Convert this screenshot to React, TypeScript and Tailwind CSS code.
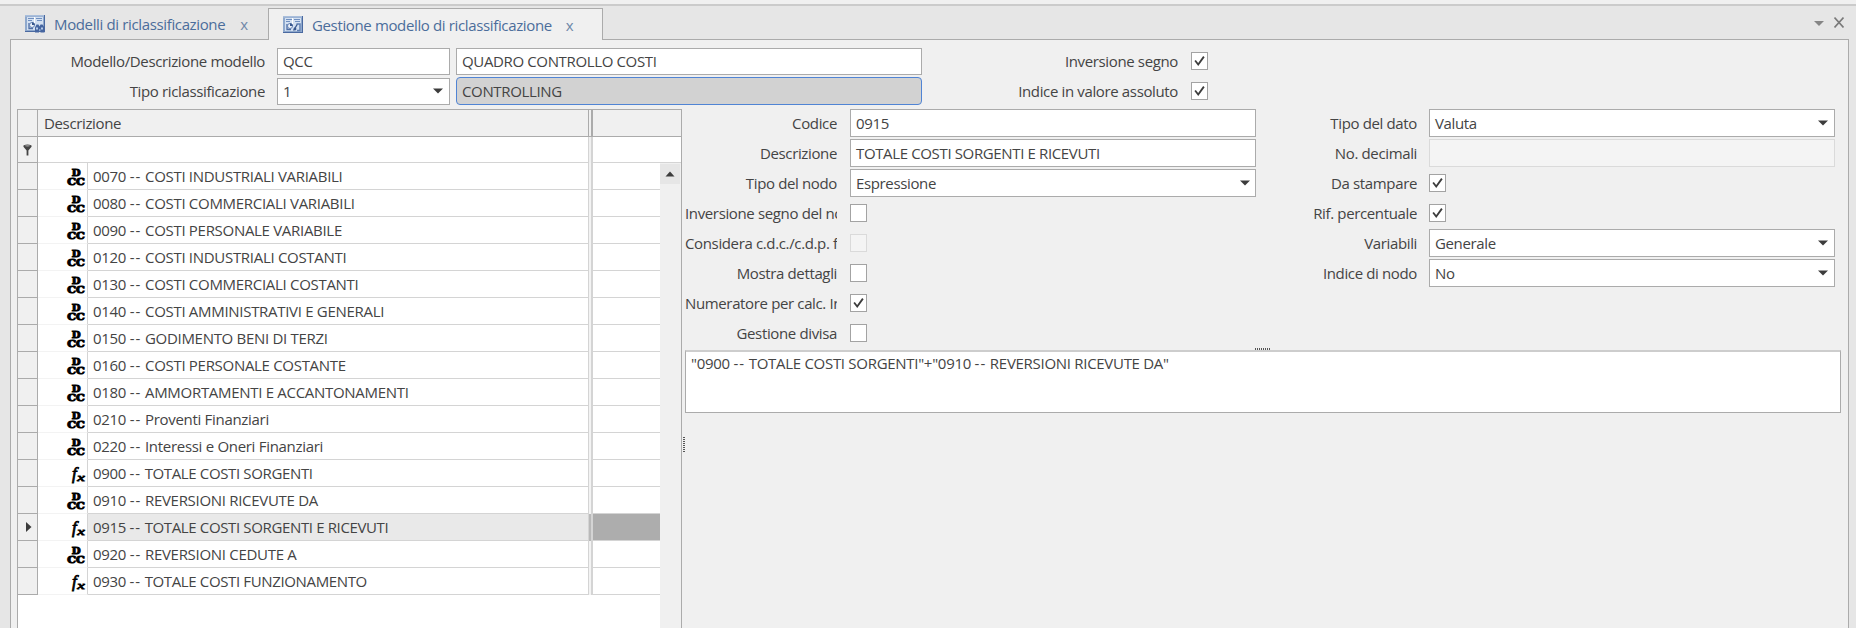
import type { ReactNode } from "react";

type Kind = "dcc" | "fx";

const rows: { kind: Kind; code: string; name: string; selected?: boolean }[] = [
  { kind: "dcc", code: "0070", name: "COSTI INDUSTRIALI VARIABILI" },
  { kind: "dcc", code: "0080", name: "COSTI COMMERCIALI VARIABILI" },
  { kind: "dcc", code: "0090", name: "COSTI PERSONALE VARIABILE" },
  { kind: "dcc", code: "0120", name: "COSTI INDUSTRIALI COSTANTI" },
  { kind: "dcc", code: "0130", name: "COSTI COMMERCIALI COSTANTI" },
  { kind: "dcc", code: "0140", name: "COSTI AMMINISTRATIVI E GENERALI" },
  { kind: "dcc", code: "0150", name: "GODIMENTO BENI DI TERZI" },
  { kind: "dcc", code: "0160", name: "COSTI PERSONALE COSTANTE" },
  { kind: "dcc", code: "0180", name: "AMMORTAMENTI E ACCANTONAMENTI" },
  { kind: "dcc", code: "0210", name: "Proventi Finanziari" },
  { kind: "dcc", code: "0220", name: "Interessi e Oneri Finanziari" },
  { kind: "fx", code: "0900", name: "TOTALE COSTI SORGENTI" },
  { kind: "dcc", code: "0910", name: "REVERSIONI RICEVUTE DA" },
  { kind: "fx", code: "0915", name: "TOTALE COSTI SORGENTI E RICEVUTI", selected: true },
  { kind: "dcc", code: "0920", name: "REVERSIONI CEDUTE A" },
  { kind: "fx", code: "0930", name: "TOTALE COSTI FUNZIONAMENTO" },
];

function Dashes() {
  return <span className="tracking-[1px]">--</span>;
}

function NodeIcon({ kind }: { kind: Kind }) {
  if (kind === "dcc") {
    return (
      <svg className="block shrink-0 overflow-visible tracking-normal" width="18" height="18" viewBox="0 0 18 18" fontFamily="'DejaVu Serif', serif" fontWeight="700" fontSize="10" stroke="#000" strokeWidth="1.1">
        <text x="4.8" y="8" textLength="8.8" lengthAdjust="spacingAndGlyphs">D</text>
        <text x="0.3" y="17.4" textLength="17.6" lengthAdjust="spacingAndGlyphs">CC</text>
      </svg>
    );
  }
  return (
    <svg className="block shrink-0 overflow-visible tracking-normal" width="18" height="18" viewBox="0 0 18 18" fontFamily="'Liberation Serif', serif" fontStyle="italic" stroke="#000" strokeWidth="0.8">
      <text x="5" y="13.5" fontSize="17">f</text>
      <text x="10.2" y="15.8" fontSize="11" textLength="7.6" lengthAdjust="spacingAndGlyphs">x</text>
    </svg>
  );
}

function TabIcon({ search }: { search?: boolean }) {
  return (
    <svg className="block shrink-0" width="20" height="18" viewBox="0 0 20 18">
      <rect x="0" y="0" width="20" height="17" fill="#8fa9cd" />
      <rect x="0" y="0" width="20" height="1.5" fill="#a9bedb" />
      <path d="M19 0h1v17H0v-1h19z" fill="#4a69a0" />
      <rect x="2" y="2" width="16" height="13" fill="#d3e0f1" />
      <path d="M3 3.5h6M11 3.5h6M3 5.5h4M12 5.5h5" stroke="#6f8fc0" />
      <path d="M9.5 2v7" stroke="#fff" />
      <path d="M4 8v5.5h4" fill="none" stroke="#4f6fa6" strokeWidth="1.3" />
      <circle cx="7" cy="10" r="2.5" fill="#eef3fa" stroke="#6482b4" strokeWidth="1" />
      <path d="M7 10V7.2A2.8 2.8 0 0 1 9.8 10z" fill="#38588e" />
      {search ? (
        <g>
          <path d="M10 17.5v-5l1.5-3h2l1 2 1-2h2l2 3v5h-4v-3h-1.5v3z" fill="#4565a0" />
          <path d="M11 13.5h2M16 13.5h2" stroke="#b7cbe8" strokeWidth="2" />
        </g>
      ) : (
        <g>
          <path d="M10.5 14.5l4-6.5" stroke="#38588e" strokeWidth="1.3" />
          <path d="M13.5 8H17v6.5h-3" fill="none" stroke="#5f7fb2" strokeWidth="1.5" />
          <circle cx="12" cy="13" r="1.4" fill="#38588e" />
        </g>
      )}
    </svg>
  );
}

function Arrow() {
  return (
    <svg className="block shrink-0" width="10" height="6" viewBox="0 0 10 6">
      <path d="M0 0.5h10L5 5.5z" fill="#3c3c3c" />
    </svg>
  );
}

function Field({ children, className = "", drop }: { children?: ReactNode; className?: string; drop?: boolean }) {
  return (
    <div className={"flex shrink-0 items-center justify-between border border-[#ababab] bg-white pl-[5px] " + className}>
      <span>{children}</span>
      {drop && <Arrow />}
    </div>
  );
}

function Check({ checked, disabled }: { checked?: boolean; disabled?: boolean }) {
  return (
    <div className={"flex h-[18px] w-[17px] shrink-0 items-center justify-center border " + (disabled ? "border-[#dadada] bg-[#f4f4f4]" : "border-[#a3a3a3] bg-white")}>
      {checked && (
        <svg className="block" width="11" height="12" viewBox="0 0 12 12" fill="none" stroke="#3c3c3c" strokeWidth="2">
          <path d="M1.2 5.5L4.6 9.8L10.8 1.2" />
        </svg>
      )}
    </div>
  );
}

function Row({ label, labelClass, children, clip }: { label: string; labelClass: string; children: ReactNode; clip?: boolean }) {
  return (
    <div className="flex h-[30px] items-center">
      <span className={"shrink-0 overflow-hidden whitespace-nowrap " + (clip ? "text-left " : "text-right ") + labelClass}>{label}</span>
      {children}
    </div>
  );
}

function Tree() {
  return (
    <div className="flex w-[665px] shrink-0 flex-col border-x border-t border-[#ababab] bg-[#f0f0f0]">
      <div className="flex h-[27px] shrink-0 border-b border-[#ababab]">
        <div className="w-5 border-r border-[#ababab]" />
        <div className="flex w-[551px] items-center border-r border-[#ababab] pl-[6px]">Descrizione</div>
        <div className="w-[4px] border-r-2 border-[#ababab]" />
      </div>
      <div className="flex h-[26px] shrink-0">
        <div className="flex w-5 items-center justify-center border-r border-b border-[#ababab]">
          <svg className="block" width="9" height="12" viewBox="0 0 10 13">
            <path d="M0.5 1.5Q5-0.5 9.5 1.5V3L6 7v5.5H4V7L0.5 3z" fill="#444" />
            <ellipse cx="5" cy="1.9" rx="3" ry="0.8" fill="#aaa" />
          </svg>
        </div>
        <div className="w-[551px] border-r border-b border-[#d4d4d4] bg-white" />
        <div className="w-[4px] border-r-2 border-[#d4d4d4]" />
        <div className="grow border-b border-[#d4d4d4] bg-white" />
      </div>
      <div className="flex grow">
        <div className="flex w-[642px] flex-col bg-white">
          {rows.map((r) => (
            <div key={r.code} className="flex h-[27px] shrink-0">
              <div className="flex w-5 shrink-0 items-center border-r border-b border-[#ababab] bg-[#f0f0f0] pl-[8px]">
                {r.selected && (
                  <svg className="block" width="6" height="10" viewBox="0 0 6 10">
                    <path d="M0 0l5.5 5L0 10z" fill="#3c3c3c" />
                  </svg>
                )}
              </div>
              <div className="flex w-[50px] shrink-0 items-start justify-end border-r border-r-[#d4d4d4] border-b border-b-[#f3f3f3] pt-[5px] pr-[2px]">
                <NodeIcon kind={r.kind} />
              </div>
              <div className={"flex w-[501px] shrink-0 items-center border-r border-b border-[#d4d4d4] pl-[5px] " + (r.selected ? "bg-[#e9e9e9]" : "")}>
                <span className={r.name.startsWith("TOTALE") ? "tracking-[-0.36px]" : "tracking-[-0.3px]"}>
                  {r.code} <Dashes /> {r.name}
                </span>
              </div>
              <div className={"w-[4px] shrink-0 border-r-2 border-[#d4d4d4] " + (r.selected ? "bg-[#b9b9b9]" : "bg-[#f3f3f3]")} />
              <div className={"grow border-b border-[#d4d4d4] " + (r.selected ? "bg-[#adadad]" : "")} />
            </div>
          ))}
        </div>
        <div className="flex grow flex-col bg-[#f0f0f0] pr-px">
          <div className="mt-px flex h-5 items-center justify-center bg-[#e6e6e6]">
            <svg className="block" width="10" height="6" viewBox="0 0 10 6">
              <path d="M0.5 5.5h9L5 0.5z" fill="#3c3c3c" />
            </svg>
          </div>
        </div>
      </div>
    </div>
  );
}

export default function App() {
  const left = "w-[152px] mr-[13px]";
  const right = "w-[161px] mr-[12px]";
  return (
    <div className="flex h-[628px] w-[1856px] flex-col overflow-hidden bg-[#e6e6e6] font-['Open_Sans','Noto_Sans',sans-serif] text-[15px] leading-5 tracking-[-0.36px] text-[#444]">
      <div className="h-[6px] shrink-0 border-b-2 border-[#cbcbcb] bg-[#f0f0f0]" />
      <div className="flex h-[34px] shrink-0 items-end pl-[10px]">
        <div className="flex h-[34px] w-[258px] items-center border-b border-[#ababab] pt-[3px] pl-[15px] text-[#4b6d9b]">
          <TabIcon search />
          <span className="ml-[9px] whitespace-nowrap">Modelli di riclassificazione</span>
          <span className="ml-[15px] text-[#6f88a8]">x</span>
        </div>
        <div className="flex h-8 w-[335px] items-center border-x border-t border-[#ababab] bg-[#f0f0f0] pt-px pl-[14px] text-[#4b6d9b]">
          <TabIcon />
          <span className="ml-[9px] whitespace-nowrap">Gestione modello di riclassificazione</span>
          <span className="ml-[14px] text-[#6f88a8]">x</span>
        </div>
        <div className="flex h-[34px] w-[1246px] items-center justify-end gap-[10px] border-b border-[#ababab] pr-[5px]">
          <svg className="mt-[2px] block" width="10" height="5" viewBox="0 0 10 5">
            <path d="M0 0h10L5 5z" fill="#858585" />
          </svg>
          <svg className="block" width="10" height="11" viewBox="0 0 10 11" stroke="#7a7a7a" strokeWidth="1.6">
            <path d="M0.5 0.5l9 10M9.5 0.5l-9 10" />
          </svg>
        </div>
      </div>
      <div className="ml-[10px] flex w-[1839px] grow flex-col border-x border-[#ababab] bg-[#f0f0f0]">
        <div className="flex h-[69px] shrink-0 pt-[6px]">
          <div className="flex flex-col">
            <Row label="Modello/Descrizione modello" labelClass="w-[254px] mr-[12px]">
              <Field className="mr-[6px] h-[27px] w-[173px]">QCC</Field>
              <Field className="h-[27px] w-[466px]">QUADRO CONTROLLO COSTI</Field>
            </Row>
            <Row label="Tipo riclassificazione" labelClass="w-[254px] mr-[12px]">
              <Field drop className="mr-[6px] h-[27px] w-[173px] pr-[6px]">1</Field>
              <div className="flex h-[28px] w-[466px] items-center rounded-[4px] border border-[#5084d4] bg-[#d2d2d2] pl-[5px]">CONTROLLING</div>
            </Row>
          </div>
          <div className="flex flex-col">
            <Row label="Inversione segno" labelClass="w-[256px] mr-[13px]">
              <Check checked />
            </Row>
            <Row label="Indice in valore assoluto" labelClass="w-[256px] mr-[13px]">
              <Check checked />
            </Row>
          </div>
        </div>
        <div className="flex grow pl-[6px]">
          <Tree />
          <div className="flex w-[3px] shrink-0 flex-col items-center gap-px pt-[328px]">
            {[0, 1, 2, 3, 4, 5, 6, 7].map((i) => (
              <div key={i} className="h-px w-[2px] bg-[#555]" />
            ))}
          </div>
          <div className="flex flex-col">
            <div className="flex h-[239px]">
              <div className="-mt-px flex w-[571px] flex-col">
                <Row label="Codice" labelClass={left}><Field className="h-[28px] w-[406px]">0915</Field></Row>
                <Row label="Descrizione" labelClass={left}><Field className="h-[28px] w-[406px]">TOTALE COSTI SORGENTI E RICEVUTI</Field></Row>
                <Row label="Tipo del nodo" labelClass={left}><Field drop className="h-[28px] w-[406px] pr-[5px]">Espressione</Field></Row>
                <Row clip label="Inversione segno del nodo" labelClass={left}><Check /></Row>
                <Row clip label="Considera c.d.c./c.d.p. f" labelClass={left}><Check disabled /></Row>
                <Row label="Mostra dettagli" labelClass={left}><Check /></Row>
                <Row clip label="Numeratore per calc. In" labelClass={left}><Check checked /></Row>
                <Row label="Gestione divisa" labelClass={left}><Check /></Row>
              </div>
              <div className="-mt-px flex flex-col">
                <Row label="Tipo del dato" labelClass={right}><Field drop className="h-[28px] w-[406px] pr-[6px]">Valuta</Field></Row>
                <Row label="No. decimali" labelClass={right}><div className="h-[28px] w-[406px] border border-[#dadada] bg-[#f4f4f4]" /></Row>
                <Row label="Da stampare" labelClass={right}><Check checked /></Row>
                <Row label="Rif. percentuale" labelClass={right}><Check checked /></Row>
                <Row label="Variabili" labelClass={right}><Field drop className="h-[28px] w-[406px] pr-[6px]">Generale</Field></Row>
                <Row label="Indice di nodo" labelClass={right}><Field drop className="h-[28px] w-[406px] pr-[6px]">No</Field></Row>
              </div>
            </div>
            <div className="flex h-[2px] gap-px pl-[570px]">
              {[0, 1, 2, 3, 4, 5, 6, 7].map((i) => (
                <div key={i} className="h-[2px] w-px bg-[#555]" />
              ))}
            </div>
            <div className="h-[63px] w-[1156px] border border-t-2 border-[#ababab] border-t-[#cdcdcd] bg-white pt-px pl-[5px] tracking-[-0.29px]">
              "0900 <Dashes /> TOTALE COSTI SORGENTI"+"0910 <Dashes /> REVERSIONI RICEVUTE DA"
            </div>
          </div>
        </div>
      </div>
    </div>
  );
}
